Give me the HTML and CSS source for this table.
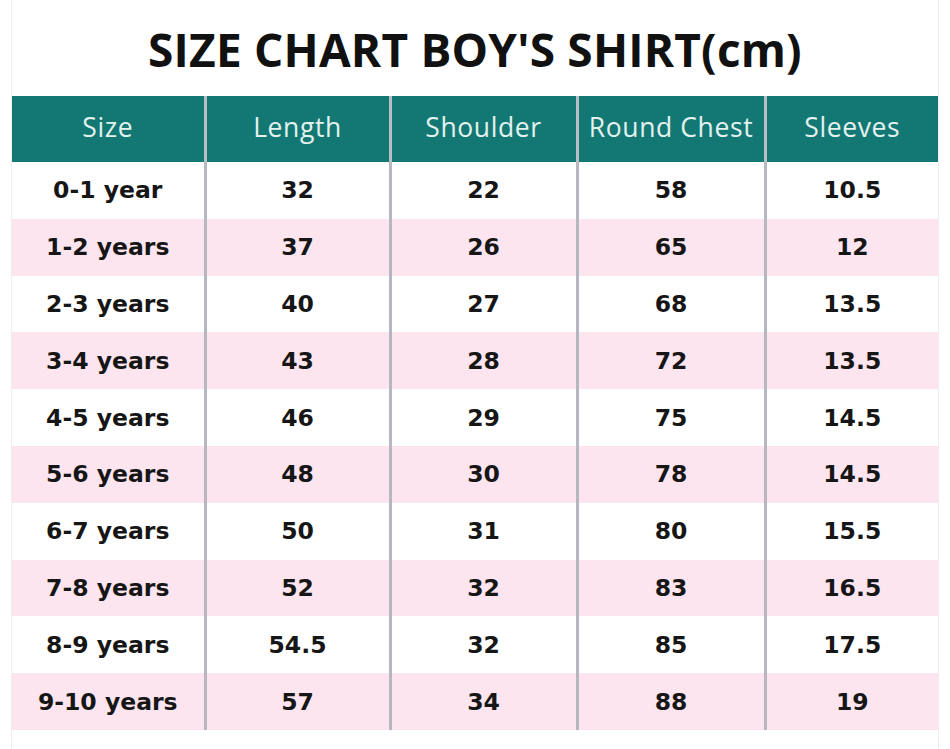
FILE: index.html
```html
<!DOCTYPE html>
<html>
<head>
<meta charset="utf-8">
<link rel="stylesheet" href="styles.css">
</head>
<body>
<div class="sheet">
  <h1 class="title">SIZE CHART BOY'S SHIRT(cm)</h1>
  <table class="chart">
    <colgroup>
      <col class="c1"><col class="c2"><col class="c3"><col class="c4"><col class="c5">
    </colgroup>
    <thead>
      <tr><th>Size</th><th>Length</th><th>Shoulder</th><th>Round Chest</th><th>Sleeves</th></tr>
    </thead>
    <tbody>
      <tr><td>0-1 year</td><td>32</td><td>22</td><td>58</td><td>10.5</td></tr>
      <tr class="pink"><td>1-2 years</td><td>37</td><td>26</td><td>65</td><td>12</td></tr>
      <tr><td>2-3 years</td><td>40</td><td>27</td><td>68</td><td>13.5</td></tr>
      <tr class="pink"><td>3-4 years</td><td>43</td><td>28</td><td>72</td><td>13.5</td></tr>
      <tr><td>4-5 years</td><td>46</td><td>29</td><td>75</td><td>14.5</td></tr>
      <tr class="pink"><td>5-6 years</td><td>48</td><td>30</td><td>78</td><td>14.5</td></tr>
      <tr><td>6-7 years</td><td>50</td><td>31</td><td>80</td><td>15.5</td></tr>
      <tr class="pink"><td>7-8 years</td><td>52</td><td>32</td><td>83</td><td>16.5</td></tr>
      <tr><td>8-9 years</td><td>54.5</td><td>32</td><td>85</td><td>17.5</td></tr>
      <tr class="pink"><td>9-10 years</td><td>57</td><td>34</td><td>88</td><td>19</td></tr>
    </tbody>
  </table>
</div>
</body>
</html>
```
FILE: styles.css
```css
html, body {
  margin: 0;
  padding: 0;
  background: #ffffff;
}
.sheet {
  margin-left: 11px;
  width: 926px;
  height: 749px;
  border-left: 1px solid #eeeeee;
  border-right: 1px solid #eeeeee;
  box-sizing: content-box;
}
.title {
  margin: 0;
  height: 96px;
  line-height: 98px;
  text-align: center;
  font-family: "Open Sans", "Liberation Sans", sans-serif;
  font-weight: 700;
  font-size: 46px;
  color: #111111;
  letter-spacing: 0.2px;
  white-space: nowrap;
}
.chart {
  width: 926px;
  border-collapse: collapse;
  table-layout: fixed;
}
.c1 { width: 193px; }
.c2 { width: 185px; }
.c3 { width: 187px; }
.c4 { width: 188px; }
.c5 { width: 173px; }
.chart th {
  height: 66px;
  padding: 0 0 4px 0;
  box-sizing: border-box;
  background: #137873;
  color: #e3f1ef;
  font-family: "Open Sans", "Liberation Sans", sans-serif;
  font-weight: 400;
  font-size: 26.5px;
  letter-spacing: 0.6px;
  text-align: center;
  white-space: nowrap;
  border-left: 3px solid #b9bdc6;
}
.chart td {
  height: 56.8px;
  padding: 0;
  text-align: center;
  font-family: "DejaVu Sans", "Open Sans", sans-serif;
  font-weight: 700;
  font-size: 23.5px;
  letter-spacing: 0;
  white-space: nowrap;
  color: #161616;
  border-left: 3px solid #b7b7c2;
}
.chart th:first-child, .chart td:first-child {
  border-left: none;
}
.chart tr.pink td {
  background: #fde5f0;
}
```
